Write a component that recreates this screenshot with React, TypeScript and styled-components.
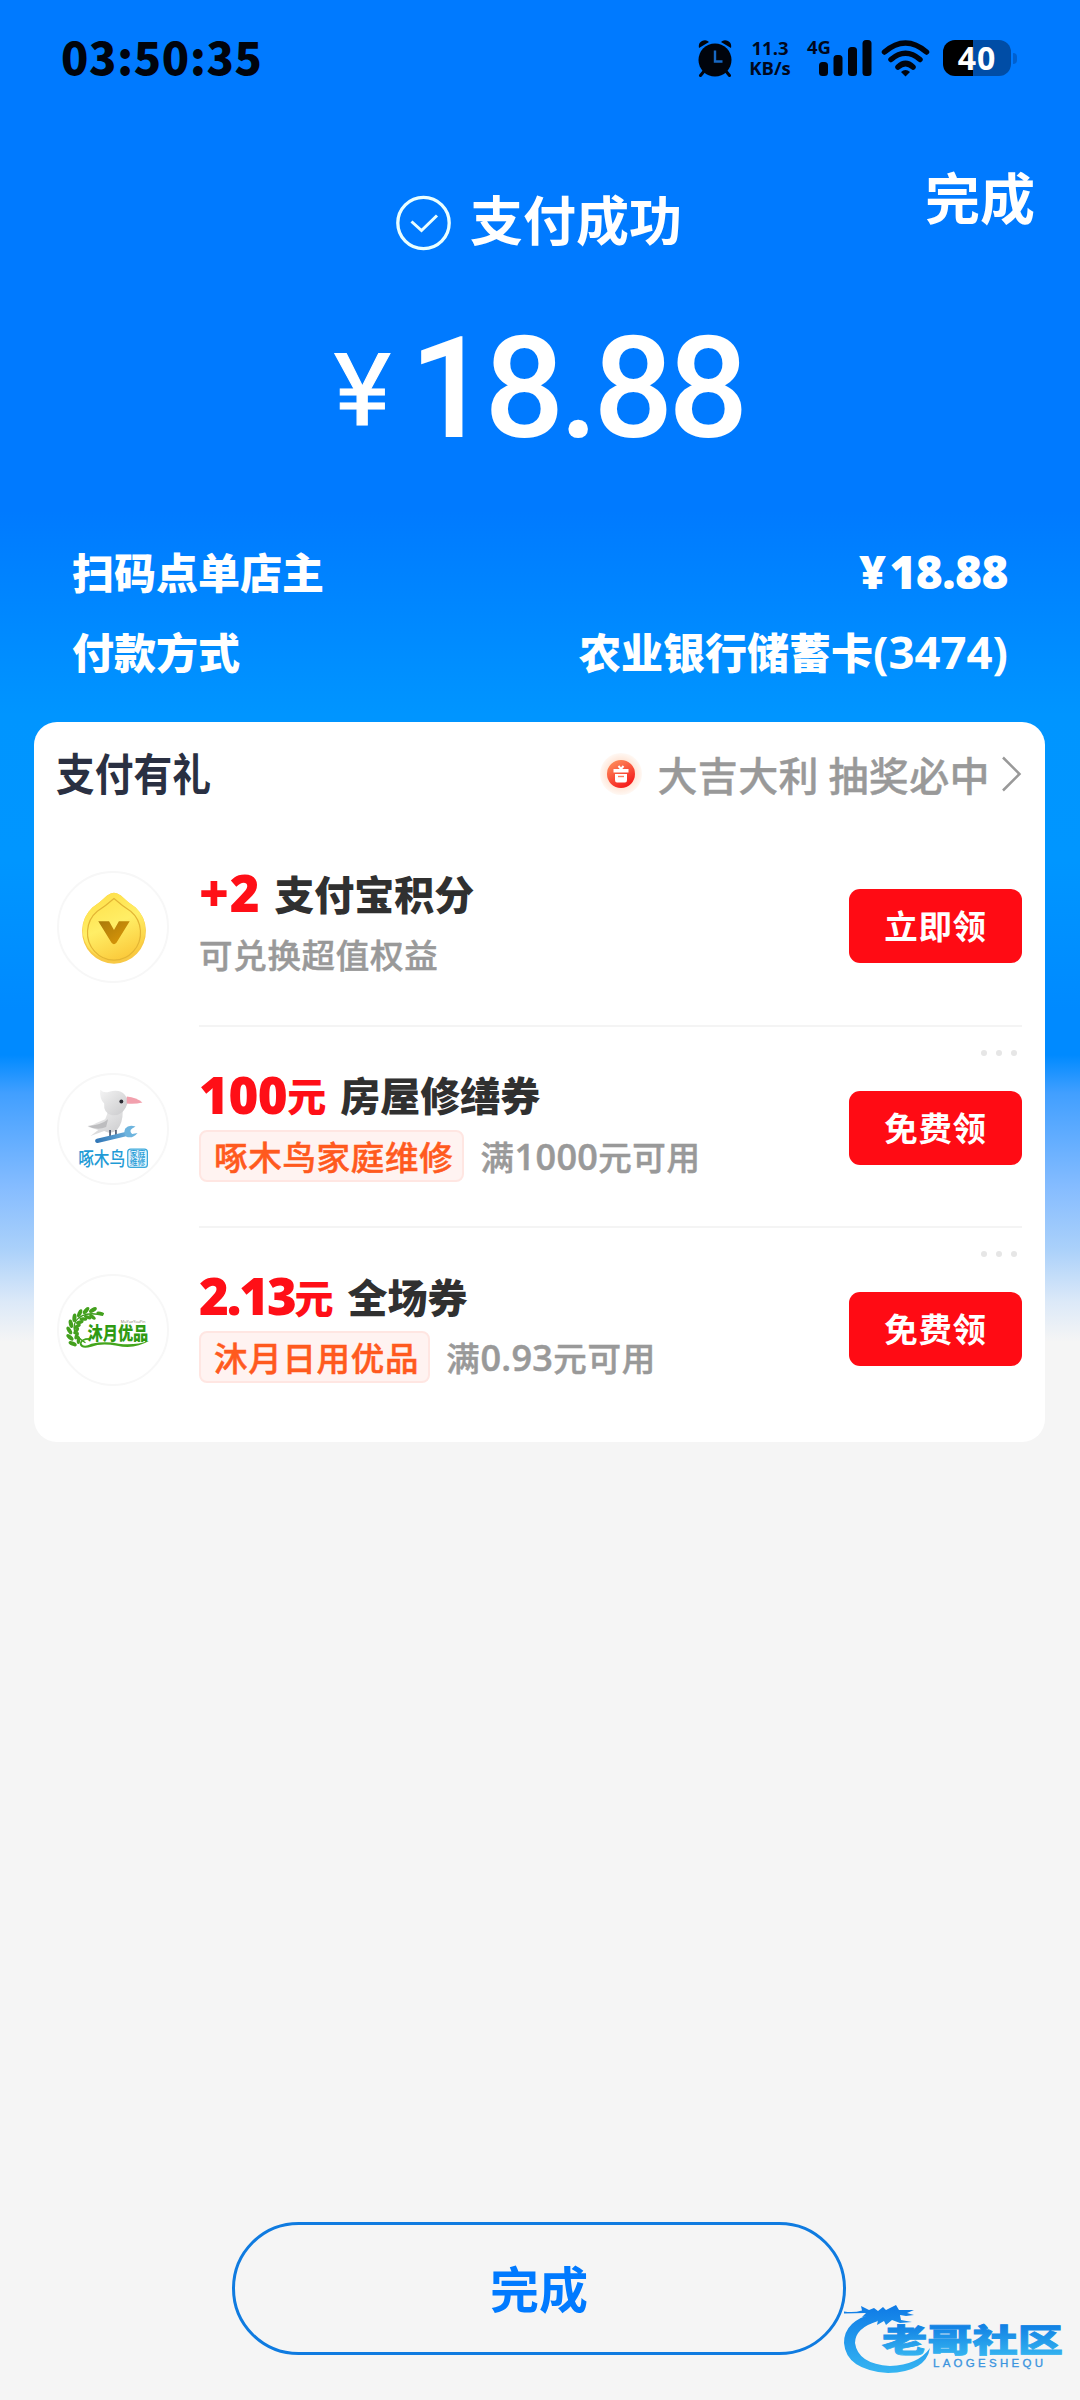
import React from "react";
import styled, { createGlobalStyle } from "styled-components";

const CJK = `"Noto Sans CJK SC", sans-serif`;
const MIXED = `"Open Sans", "Noto Sans CJK SC", sans-serif`;

const GlobalStyle = createGlobalStyle`
  * { box-sizing: border-box; }
  body { margin: 0; background: #f5f5f5; font-family: ${CJK}; }
`;

const Page = styled.div`
  position: relative;
  display: flex;
  flex-direction: column;
  width: 1080px;
  height: 2400px;
  overflow: hidden;
  background: linear-gradient(
    180deg,
    #007aff 0px, #007aff 510px, #0095ff 715px, #0096ff 860px, #008aff 1010px,
    #008aff 1055px, #419fff 1093px, #85bcff 1187px, #abd1fa 1250px,
    #dce9f8 1302px, #f5f5f5 1342px
  );
`;

const StatusBar = styled.header`
  display: flex;
  align-items: center;
  height: 116px;
  padding: 0 63px 0 61px;
`;

const Clock = styled.div`
  flex: 1;
  padding-bottom: 5px;
  font: 900 45px/60px ${CJK};
  letter-spacing: 0.7px;
  color: #00040c;
`;

const NetSpeed = styled.div`
  display: flex;
  flex-direction: column;
  width: 46px;
  margin: 0 14px 0 15px;
  font: 700 18.5px/20px ${MIXED};
  text-align: center;
  color: #00081c;
`;

const SignalIcon = styled.svg`
  margin-right: 9px;
  overflow: visible;
`;

const WifiIcon = styled.svg`
  margin-right: 13px;
`;

const Battery = styled.div`
  display: flex;
  align-items: center;
`;

const BatteryBody = styled.div`
  width: 68px;
  height: 36px;
  border-radius: 12px;
  background: linear-gradient(90deg, #000 0 30px, #004da6 30px);
  font: 700 32px/36px ${MIXED};
  letter-spacing: 1px;
  text-align: center;
  color: #fff;
`;

const BatteryNub = styled.div`
  width: 4px;
  height: 11px;
  margin-left: 2px;
  border-radius: 0 6px 6px 0;
  background: #0060cf;
`;

const TitleRow = styled.div`
  display: grid;
  grid-template-columns: 1fr auto 1fr;
  align-items: start;
  height: 193px;
  padding: 42px 45px 0;
`;

const Title = styled.h1`
  grid-column: 2;
  display: flex;
  align-items: center;
  gap: 19px;
  margin: 30px 2px 0 0;
  font: 700 53px/80px ${CJK};
  color: #fff;

  span { margin-top: -10px; }
`;

const DoneLink = styled.button`
  justify-self: end;
  padding: 0;
  border: 0;
  background: none;
  font: 700 55px/74px ${CJK};
  color: #fff;
`;

const Amount = styled.div`
  display: flex;
  justify-content: center;
  align-items: baseline;
  height: 227px;
  padding-right: 1px;
  font: 500 141px/160px Roboto, sans-serif;
  letter-spacing: -5.2px;
  color: #fff;
`;

const Yen = styled.span`
  margin-right: 21px;
  font-size: 100px;
  font-weight: 400;
  letter-spacing: 0;
  -webkit-text-stroke: 1px currentColor;
  transform: translateY(-12px) scaleX(1.08);
`;

const Details = styled.dl`
  display: flex;
  flex-direction: column;
  margin: 0;
  padding: 0 72px;
  height: 186px;
`;

const DetailRow = styled.div`
  display: flex;
  justify-content: space-between;
  height: 80px;
  font: 900 42px/70px ${CJK};
  color: #fff;

  dt, dd { margin: 0; }
`;

const Figure = styled.span<{ $size: number; $spacing?: number; $weight?: number }>`
  font-family: "Open Sans", sans-serif;
  font-size: ${(p) => p.$size}px;
  font-weight: ${(p) => p.$weight ?? 700};
  line-height: 1;
  letter-spacing: ${(p) => p.$spacing ?? 0}px;
`;

const SmallYen = styled.span`
  margin-right: 4px;
`;

const Card = styled.section`
  display: flex;
  flex-direction: column;
  width: 1011px;
  height: 720px;
  margin-left: 34px;
  padding: 0 23px;
  border-radius: 23px;
  background: #fff;
`;

const CardHead = styled.div`
  display: flex;
  align-items: center;
  height: 103px;
`;

const CardTitle = styled.h2`
  flex: 1;
  margin: 0 0 3px -1px;
  font: 700 44px/64px ${CJK};
  color: #2a3042;
  transform: scaleX(0.88);
  transform-origin: left center;
`;

const Lucky = styled.div`
  display: flex;
  align-items: center;
  font: 500 40px/60px ${CJK};
  letter-spacing: 0.4px;
  color: #999;
  -webkit-text-stroke: 0.4px currentColor;

  span { margin: 0 11px 0 14px; }
`;

const Row = styled.article`
  display: flex;
  height: 201.5px;
`;

const Avatar = styled.div`
  flex: none;
  display: flex;
  width: 112px;
  height: 112px;
  margin: 46px 30px 0 0;
  border: 2px solid #f7f7f7;
  border-radius: 50%;
  overflow: hidden;
  svg { display: block; margin: -1px; }
`;

const RowMain = styled.div<{ $last?: boolean }>`
  flex: 1;
  display: flex;
  justify-content: space-between;
  border-bottom: 2px solid ${(p) => (p.$last ? "transparent" : "#f4f4f4")};
`;

const RowText = styled.div`
  padding: 37px 0 0 0;
`;

const Offer = styled.div`
  display: flex;
  align-items: center;
  height: 61px;
  font: 900 40px/60px ${CJK};
  color: #303030;
`;

const Value = styled.span`
  display: flex;
  align-items: center;
  margin-right: 14px;
  font-size: 39px;
  color: #ff0f17;
`;

const Meta = styled.div`
  display: flex;
  align-items: center;
  height: 52px;
  margin: 5px 0 0;
  font: 500 33.5px/50px ${CJK};
  letter-spacing: 0.7px;
  color: #999;
  -webkit-text-stroke: 0.5px currentColor;
`;

const Tag = styled.span`
  height: 52px;
  margin-right: 16px;
  padding: 0 9px 0 13px;
  border: 2px solid #ffe6e2;
  border-radius: 8px;
  background: #fff3f1;
  line-height: 48px;
  color: #ff5a1e;
`;

const RowSide = styled.div`
  display: flex;
  flex-direction: column;
  align-items: flex-end;
`;

const Dots = styled.div<{ $hidden?: boolean }>`
  display: flex;
  gap: 9px;
  height: 6px;
  margin: 23px 5px 35px 0;
  visibility: ${(p) => (p.$hidden ? "hidden" : "visible")};

  i { width: 6px; height: 6px; border-radius: 50%; background: #e6e6e6; }
`;

const ClaimButton = styled.button`
  width: 173px;
  height: 74px;
  padding: 0;
  border: 0;
  border-radius: 11px;
  background: #ff0b14;
  font: 700 33.5px/66px ${CJK};
  letter-spacing: 0.7px;
  color: #fff;

  span { display: block; padding-bottom: 2px; }
`;

const Finish = styled.button`
  width: 614px;
  height: 133px;
  margin: auto 0 45px 232px;
  padding: 0 0 4px;
  border: 3px solid #0f7be0;
  border-radius: 67px;
  background: transparent;
  font: 700 49px/70px ${CJK};
  color: #007aff;
`;

const Watermark = styled.svg`
  position: absolute;
  left: 840px;
  top: 2296px;
`;

const CoinArt = () => (
  <svg width="112" height="112" viewBox="0 0 112 112">
    <defs>
      <linearGradient id="coin" x1="0.2" y1="0" x2="0.6" y2="1">
        <stop offset="0" stopColor="#ffdf48" />
        <stop offset="0.5" stopColor="#ffee66" />
        <stop offset="1" stopColor="#fbc93a" />
      </linearGradient>
      <linearGradient id="vee" x1="0" y1="0" x2="1" y2="1">
        <stop offset="0" stopColor="#a9790a" />
        <stop offset="1" stopColor="#e09a08" />
      </linearGradient>
    </defs>
    <path d="M57 20Q60 20 64 23Q71 30 79 35A32.500 33 0 1 1 35 35Q43 30 50 23Q54 20 57 20Z" fill="#f8c945" />
    <path d="M57 20Q60 20 64 23Q71 30 79 35A32 31.500 0 1 1 35 35Q43 30 50 23Q54 20 57 20Z" fill="url(#coin)" />
    <path d="M57 26Q66 34 74 39A27 28 0 1 1 40 39Q48 34 57 26Z" fill="none" stroke="#e3b535" strokeWidth="1.200" />
    <path d="M41 49H52L57 58L62 49H73L59.500 71Q57 74 54.500 71Z" fill="url(#vee)" />
  </svg>
);

const BirdArt = () => (
  <svg width="112" height="112" viewBox="0 0 112 112">
    <defs>
      <linearGradient id="bird" x1="0" y1="0" x2="1" y2="1">
        <stop offset="0" stopColor="#f4f4f4" />
        <stop offset="1" stopColor="#c9c9cb" />
      </linearGradient>
      <linearGradient id="wrench" gradientUnits="userSpaceOnUse" x1="38" y1="68" x2="80" y2="52">
        <stop offset="0" stopColor="#2f74b5" />
        <stop offset="1" stopColor="#7cc0e6" />
      </linearGradient>
    </defs>
    <path d="M31 53Q40 48 48 45Q50 41 51 36H66Q66 50 60 56Q54 61 47 57L33 62L41 56Z" fill="url(#bird)" />
    <path d="M30 52Q44 51 51 45L49 53Q40 57 30 52Z" fill="#bdbdbf" />
    <path d="M43 15Q47 19 52 17Q63 14 68 20Q73 26 69 33Q64 42 55 41Q46 39 47 29Q42 24 43 15Z" fill="url(#bird)" />
    <path d="M70 22Q80 23 86 28Q78 30 70 29Z" fill="#f2a0ad" />
    <circle cx="64.500" cy="27" r="2" fill="#2b2b33" />
    <path d="M53 56V63M59 56V62" stroke="#33415c" strokeWidth="1.500" />
    <path d="M40 67L70 60" stroke="url(#wrench)" strokeWidth="4.500" strokeLinecap="round" />
    <path d="M79 52.500Q72 50 68.500 54.500Q66 60 70 63Q76 65 81 59L75.500 60Q72 57 75.500 54.500Z" fill="#6db4de" />
    <text x="20.500" y="93" textLength="48" lengthAdjust="spacingAndGlyphs" fontSize="19.500" fontWeight="500" fontFamily="Noto Sans CJK SC, sans-serif" fill="#1f9bd6">啄木鸟</text>
    <rect x="71" y="75.500" width="20" height="18.500" rx="3" fill="#e4f5fd" stroke="#3ba9dc" strokeWidth="1.300" />
    <text x="73" y="83.500" fontSize="8" fontWeight="500" fontFamily="Noto Sans CJK SC, sans-serif" fill="#1f9bd6">家庭</text>
    <text x="73" y="92" fontSize="8" fontWeight="500" fontFamily="Noto Sans CJK SC, sans-serif" fill="#1f9bd6">维修</text>
  </svg>
);

const LEAF_ANGLES = [212, 194, 176, 158, 140, 122, 104, 86];

const LeafArt = () => (
  <svg width="112" height="112" viewBox="0 0 112 112">
    <path d="M28 68Q12 58 18 46Q26 35 46 40" fill="none" stroke="#3d9c1c" strokeWidth="1.300" />
    {LEAF_ANGLES.map((a) => {
      const rad = (a * Math.PI) / 180;
      const at = (r: number) => [34 + r * Math.cos(rad), 57 - r * Math.sin(rad)];
      const [ox, oy] = at(22.5);
      const [ix, iy] = at(15.5);
      return (
        <g key={a} fill="#43a01d">
          <ellipse cx={ox} cy={oy} rx="4.400" ry="2.100" transform={`rotate(${90 - a - 35} ${ox} ${oy})`} />
          <ellipse cx={ix} cy={iy} rx="4" ry="1.800" transform={`rotate(${90 - a + 35} ${ix} ${iy})`} />
        </g>
      );
    })}
    <ellipse cx="43" cy="38" rx="4" ry="1.700" fill="#43a01d" transform="rotate(10 43 38)" />
    <rect x="29" y="49.500" width="62" height="18" fill="#fff" />
    <text x="30" y="65.500" textLength="62" lengthAdjust="spacingAndGlyphs" fontSize="18" fontWeight="900" fontFamily="Noto Sans CJK SC, sans-serif" fill="#2f9a12">沐月优品</text>
    <text x="64" y="48" textLength="25" fontSize="4" fontFamily="Open Sans, sans-serif" fill="#8a8a70">MuYueYouPin</text>
    <path d="M32 65Q24 65 24 69Q26 73 34 69Q48 66 62 69Q78 71 93 66Q78 75 60 71Q44 68 34 72Q23 75 22 69Q23 63 32 63Z" fill="#43a51c" />
  </svg>
);

const AlarmIcon = () => (
  <svg width="34" height="37" viewBox="0 0 34 37">
    <path d="M1 8Q0 3 4 1Q8 -1 11 2ZM33 8Q34 3 30 1Q26 -1 23 2Z" fill="#00040c" />
    <path d="M7 30L2.500 35.500M27 30L31.500 35.500" stroke="#00040c" strokeWidth="3" strokeLinecap="round" />
    <circle cx="17" cy="20" r="16.500" fill="#00040c" />
    <path d="M17 10.500V21.500H24.500" fill="none" stroke="#1768c4" strokeWidth="2.400" />
  </svg>
);

const GiftIcon = () => (
  <svg width="44" height="44" viewBox="0 0 44 44">
    <defs>
      <radialGradient id="halo">
        <stop offset="0.600" stopColor="#ffe3d3" />
        <stop offset="1" stopColor="#fff8f3" />
      </radialGradient>
      <linearGradient id="gift" x1="0" y1="0" x2="0.600" y2="1">
        <stop offset="0" stopColor="#ff9a62" />
        <stop offset="1" stopColor="#f51d1d" />
      </linearGradient>
    </defs>
    <circle cx="22" cy="22" r="21" fill="url(#halo)" />
    <circle cx="22" cy="22" r="14" fill="url(#gift)" />
    <path d="M14.500 17H29.500V20.500H14.500ZM16 22H28V28Q28 30.500 26 30.500H18Q16 30.500 16 28Z" fill="#fff" />
    <path d="M19.500 14L22 17L24.500 14" fill="none" stroke="#fff" strokeWidth="2" />
    <path d="M19 24.500H25" stroke="#ff7b5c" strokeWidth="1.400" />
  </svg>
);

type Reward = {
  art: React.ReactNode;
  figure: string;
  spacing: number;
  unit?: string;
  name: string;
  tag?: string;
  hint: React.ReactNode;
  action: string;
};

const rewards: Reward[] = [
  { art: <CoinArt />, figure: "+2", spacing: 0.8, name: "支付宝积分", hint: "可兑换超值权益", action: "立即领" },
  {
    art: <BirdArt />, figure: "100", spacing: -0.5, unit: "元", name: "房屋修缮券", tag: "啄木鸟家庭维修",
    hint: <>满<Figure $size={36} $weight={600} $spacing={0.3}>1000</Figure>元可用</>, action: "免费领",
  },
  {
    art: <LeafArt />, figure: "2.13", spacing: -2.2, unit: "元", name: "全场券", tag: "沐月日用优品",
    hint: <>满<Figure $size={36} $weight={600} $spacing={0.3}>0.93</Figure>元可用</>, action: "免费领",
  },
];

export default function App() {
  return (
    <Page>
      <GlobalStyle />
      <StatusBar>
        <Clock>03:50:35</Clock>
        <AlarmIcon />
        <NetSpeed><span>11.3</span><span>KB/s</span></NetSpeed>
        <SignalIcon width="65" height="37" viewBox="0 0 65 37">
          <text x="0" y="14" fontSize="18.500" fontWeight="700" fontFamily="Open Sans, sans-serif" fill="#00081c">4G</text>
          <g fill="#00040c">
            <rect x="12" y="22" width="9" height="14" rx="3.500" />
            <rect x="26.500" y="15" width="9" height="21" rx="3.500" />
            <rect x="41" y="7" width="9" height="29" rx="3.500" />
            <rect x="55.500" y="0" width="9" height="36" rx="3.500" />
          </g>
        </SignalIcon>
        <WifiIcon width="49" height="37" viewBox="0 0 49 37">
          <g fill="none" stroke="#00040c" strokeWidth="5.500" strokeLinecap="round">
            <path d="M3.500 12Q24.500 -6 45.500 12" />
            <path d="M10 19.500Q24.500 7 39 19.500" />
            <path d="M17 27Q24.500 20 32 27" />
          </g>
          <path d="M20 32Q24.500 28 29 32L24.500 36.500Z" fill="#00040c" />
        </WifiIcon>
        <Battery>
          <BatteryBody>40</BatteryBody>
          <BatteryNub />
        </Battery>
      </StatusBar>

      <TitleRow>
        <Title>
          <svg width="55" height="56" viewBox="0 0 55 56" fill="none" stroke="#eaffff">
            <circle cx="27.500" cy="28" r="25.700" strokeWidth="3.300" />
            <path d="M15.500 26.500L25.500 35.500L41 20.500" strokeWidth="3" />
          </svg>
          <span>支付成功</span>
        </Title>
        <DoneLink>完成</DoneLink>
      </TitleRow>

      <Amount><Yen>¥</Yen>18.88</Amount>

      <Details>
        <DetailRow>
          <dt>扫码点单店主</dt>
          <dd><Figure $size={46} $weight={800} $spacing={-0.5}><SmallYen>¥</SmallYen>18.88</Figure></dd>
        </DetailRow>
        <DetailRow>
          <dt>付款方式</dt>
          <dd>农业银行储蓄卡<Figure $size={45.5}>(3474)</Figure></dd>
        </DetailRow>
      </Details>

      <Card>
        <CardHead>
          <CardTitle>支付有礼</CardTitle>
          <Lucky>
            <GiftIcon />
            <span>大吉大利 抽奖必中</span>
            <svg width="21" height="36" viewBox="0 0 21 36">
              <path d="M2 1.500L18.500 18L2 34.500" fill="none" stroke="#999" strokeWidth="2.500" />
            </svg>
          </Lucky>
        </CardHead>
        {rewards.map((r, i) => (
          <Row key={r.name}>
            <Avatar>{r.art}</Avatar>
            <RowMain $last={i === rewards.length - 1}>
              <RowText>
                <Offer>
                  <Value>
                    <Figure $size={51} $weight={800} $spacing={r.spacing}>{r.figure}</Figure>
                    {r.unit}
                  </Value>
                  {r.name}
                </Offer>
                <Meta>
                  {r.tag && <Tag>{r.tag}</Tag>}
                  <span>{r.hint}</span>
                </Meta>
              </RowText>
              <RowSide>
                <Dots $hidden={i === 0}><i /><i /><i /></Dots>
                <ClaimButton><span>{r.action}</span></ClaimButton>
              </RowSide>
            </RowMain>
          </Row>
        ))}
      </Card>

      <Finish>完成</Finish>

      <Watermark width="230" height="90" viewBox="0 0 230 90">
        <defs>
          <linearGradient id="wm" gradientUnits="userSpaceOnUse" x1="0" y1="10" x2="0" y2="78">
            <stop offset="0" stopColor="#0f7be6" />
            <stop offset="1" stopColor="#36b6f2" />
          </linearGradient>
          <linearGradient id="wmText" gradientUnits="userSpaceOnUse" x1="0" y1="29" x2="0" y2="60">
            <stop offset="0" stopColor="#1180e4" />
            <stop offset="1" stopColor="#35b4f0" />
          </linearGradient>
        </defs>
        <path d="M36 17Q4 24 4 47Q6 74 48 77Q86 76 90 52Q78 69 50 70Q18 68 15 47Q15 32 38 25Z" fill="url(#wm)" />
        <path d="M4 15.500Q14 17 22 14.500L21 10L29 14L34 12L38 15L43 11L46 14L56 9L59 14L74 14L67 17L74 19L66 20L60 19L61 24L72 26L60 27L52 24L46 29L44 25L37 29L38 24L29 28L33 20L22 21L26 17L4 17.500Z" fill="url(#wm)" />
        <text x="42" y="55.500" textLength="181" lengthAdjust="spacingAndGlyphs" fontSize="32" fontWeight="900" fontFamily="Noto Sans CJK SC, sans-serif" fill="url(#wmText)" stroke="url(#wmText)" strokeWidth="0.800">老哥社区</text>
        <text x="93" y="70.500" textLength="110" lengthAdjust="spacing" fontSize="11.500" fontFamily="Liberation Sans, sans-serif" fill="#3a94de" stroke="#3a94de" strokeWidth="0.300">LAOGESHEQU</text>
      </Watermark>
    </Page>
  );
}
